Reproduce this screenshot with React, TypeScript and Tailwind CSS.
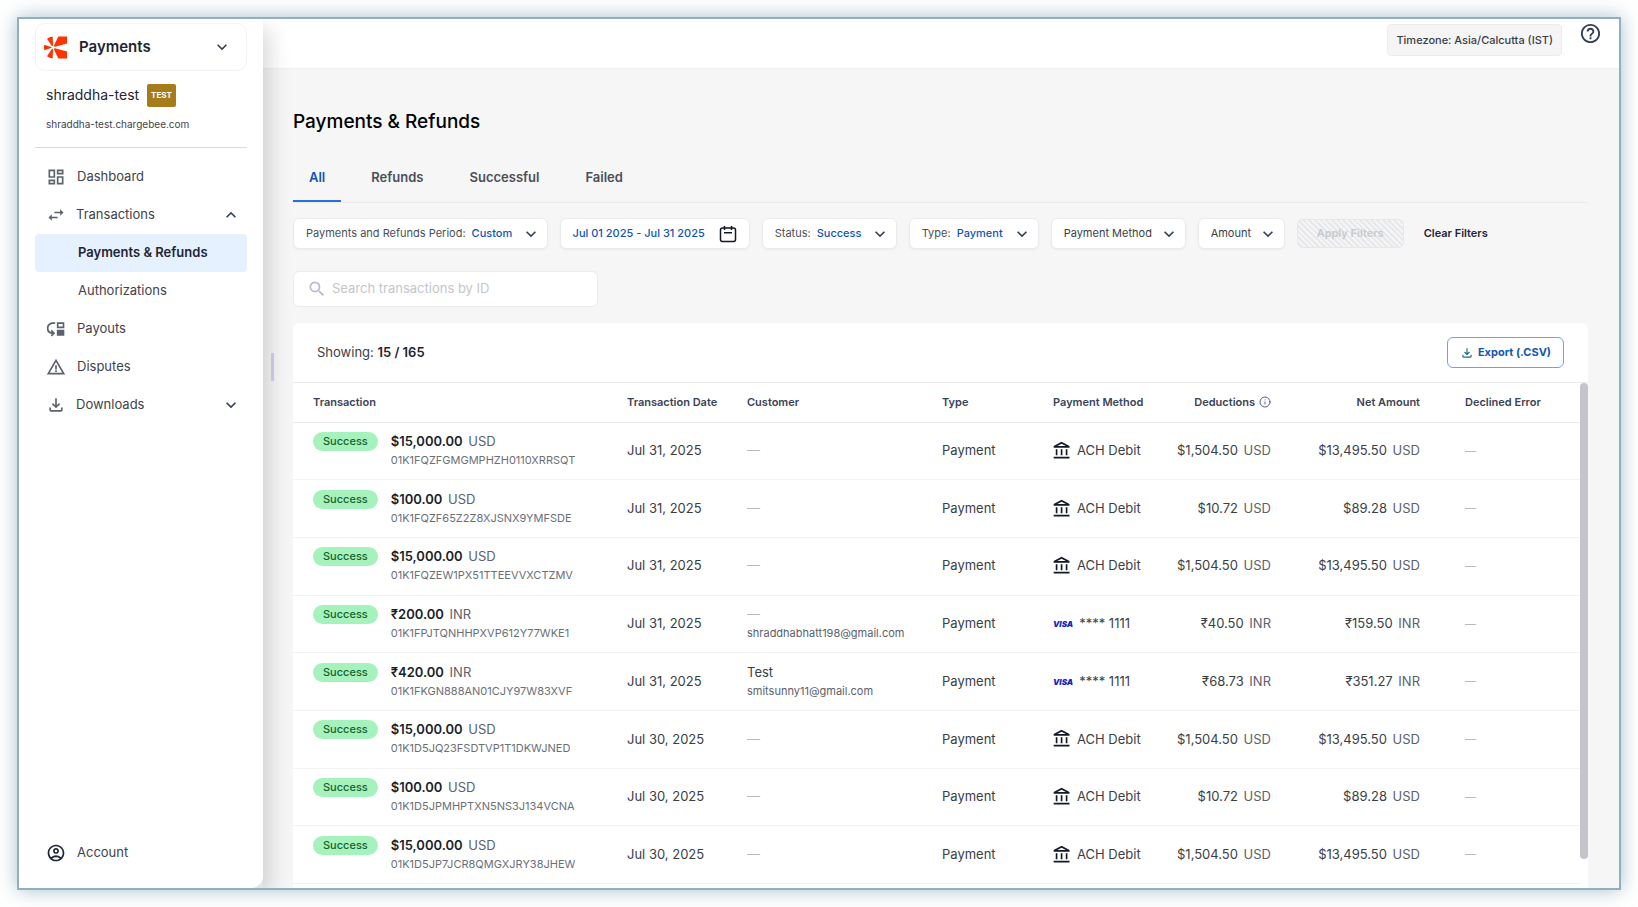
import React from "react";
import {
  MdHelpOutline,
  MdKeyboardArrowDown,
  MdKeyboardArrowUp,
  MdMoveDown,
  MdOutlineAccountBalance,
  MdOutlineAccountCircle,
  MdOutlineDashboard,
  MdOutlineFileDownload,
  MdSearch,
  MdSwapHoriz,
  MdWarningAmber,
} from "react-icons/md";
import { Info } from "lucide-react";

const tabs = ["All", "Refunds", "Successful", "Failed"];

const transactions = [
  { amount: "$15,000.00", currency: "USD", id: "01K1FQZFGMGMPHZH0110XRRSQT", date: "Jul 31, 2025", method: "ach", deductions: "$1,504.50", net: "$13,495.50" },
  { amount: "$100.00", currency: "USD", id: "01K1FQZF65Z2Z8XJSNX9YMFSDE", date: "Jul 31, 2025", method: "ach", deductions: "$10.72", net: "$89.28" },
  { amount: "$15,000.00", currency: "USD", id: "01K1FQZEW1PX51TTEEVVXCTZMV", date: "Jul 31, 2025", method: "ach", deductions: "$1,504.50", net: "$13,495.50" },
  { amount: "₹200.00", currency: "INR", id: "01K1FPJTQNHHPXVP612Y77WKE1", date: "Jul 31, 2025", email: "shraddhabhatt198@gmail.com", method: "visa", deductions: "₹40.50", net: "₹159.50" },
  { amount: "₹420.00", currency: "INR", id: "01K1FKGN888AN01CJY97W83XVF", date: "Jul 31, 2025", name: "Test", email: "smitsunny11@gmail.com", method: "visa", deductions: "₹68.73", net: "₹351.27" },
  { amount: "$15,000.00", currency: "USD", id: "01K1D5JQ23FSDTVP1T1DKWJNED", date: "Jul 30, 2025", method: "ach", deductions: "$1,504.50", net: "$13,495.50" },
  { amount: "$100.00", currency: "USD", id: "01K1D5JPMHPTXN5NS3J134VCNA", date: "Jul 30, 2025", method: "ach", deductions: "$10.72", net: "$89.28" },
  { amount: "$15,000.00", currency: "USD", id: "01K1D5JP7JCR8QMGXJRY38JHEW", date: "Jul 30, 2025", method: "ach", deductions: "$1,504.50", net: "$13,495.50" },
];

const Logo = () => (
  <svg viewBox="0 0 69 68" className="w-[23px] h-[23px]" fill="#ff3300" aria-hidden="true">
    <path d="M43 1H69V22L33 32L29 30Z" />
    <path d="M43 67H69V46L33 36L29 38Z" />
    <path d="M9 8Q16 2 26 1L27 29L24 30Z" />
    <path d="M9 60Q16 66 26 67L27 39L24 38Z" />
    <path d="M1 26L23 33V35L1 42Q-1 34 1 26Z" />
  </svg>
);

const CalendarIcon = () => (
  <svg viewBox="0 0 18 18" className="w-[18px] h-[18px]" fill="none" stroke="#111827" aria-hidden="true">
    <rect x="1.5" y="3" width="15" height="13.5" rx="2" strokeWidth="1.5" />
    <path d="M5.5 1V5M12.5 1V5M5 7.7H13" strokeWidth="1.5" />
  </svg>
);

const Dash = () => <span className="text-[#b8bac2]">—</span>;

const FilterSelect = ({ label, value }: { label?: string; value: string }) => (
  <label className="flex items-center h-[31px] pl-3 pr-[6px] bg-white border border-[#ebebed] rounded-md shadow-xs text-[11px] text-[#4b4f58] whitespace-nowrap">
    {label && <span className="mr-[6px]">{label}</span>}
    <select
      aria-label={label ? undefined : value}
      className={
        label
          ? "appearance-none bg-transparent pr-7 font-medium text-[#0f56b3]"
          : "appearance-none bg-transparent pr-[26px] text-[#3a3e47]"
      }
    >
      <option>{value}</option>
    </select>
    <MdKeyboardArrowDown className="-ml-5 w-5 h-5 text-[#334155] pointer-events-none" />
  </label>
);

const Sidebar = () => {
  const link = "flex items-center h-[38px] pl-[11px] pr-[6px] rounded";
  return (
    <aside className="relative z-10 flex flex-col w-[244px] shrink-0 px-4 pt-1 pb-4 bg-white rounded-br-xl shadow-[6px_10px_22px_rgba(0,0,0,0.16)] text-[13px] text-[#3f434c]">
      <button className="flex items-center h-12 pl-2 pr-[14px] border border-[#f3f3f5] rounded-[10px] text-left">
        <Logo />
        <span className="flex-1 ml-3 text-[15px] font-semibold text-[#1f2433]">Payments</span>
        <MdKeyboardArrowDown className="w-5 h-5 text-[#334155]" />
      </button>
      <div className="pt-3 pb-[14px] pl-[11px] border-b border-[#d9dbe0]">
        <div className="flex items-center gap-2 text-sm leading-6 text-[#1f2433]">
          shraddha-test
          <span className="flex items-center h-[23px] px-1 bg-[#a67c1a] rounded-xs text-[8px] font-bold text-white">
            TEST
          </span>
        </div>
        <a href="#" className="block mt-2 text-[10px] leading-[18px] text-[#3f434c]">
          shraddha-test.chargebee.com
        </a>
      </div>
      <nav className="flex flex-col flex-1 pt-[10px]">
        <a href="#" className={link}>
          <MdOutlineDashboard className="w-5 h-5 mr-[11px] text-[#5c616b]" />
          Dashboard
        </a>
        <button className={link}>
          <MdSwapHoriz className="w-5 h-5 mr-[10px] text-[#5c616b]" />
          Transactions
          <MdKeyboardArrowUp className="w-5 h-5 ml-auto text-[#334155]" />
        </button>
        <a href="#" className="flex items-center h-[38px] pl-[43px] rounded bg-[#e5f1ff] font-semibold text-[#1f2433]">
          Payments &amp; Refunds
        </a>
        <a href="#" className="flex items-center h-[38px] pl-[43px]">
          Authorizations
        </a>
        <a href="#" className={link}>
          <MdMoveDown className="w-5 h-5 mr-[11px] text-[#5c616b]" />
          Payouts
        </a>
        <a href="#" className={link}>
          <MdWarningAmber className="w-5 h-5 mr-[11px] text-[#5c616b]" />
          Disputes
        </a>
        <button className={link}>
          <MdOutlineFileDownload className="w-5 h-5 mr-[10px] text-[#5c616b]" />
          Downloads
          <MdKeyboardArrowDown className="w-5 h-5 ml-auto text-[#334155]" />
        </button>
        <a href="#" className="flex items-center h-[38px] pl-[11px] mt-auto">
          <MdOutlineAccountCircle className="w-5 h-5 mr-[11px] text-[#1f2433]" />
          Account
        </a>
      </nav>
      <span className="absolute top-[334px] -right-[11px] w-[3px] h-7 bg-[#c3c4e0]" />
    </aside>
  );
};

const Filters = () => (
  <div className="flex flex-wrap items-center gap-3 mt-[15px]">
    <FilterSelect label="Payments and Refunds Period:" value="Custom" />
    <button className="flex items-center gap-[14px] h-[31px] px-3 bg-white border border-[#ebebed] rounded-md shadow-xs text-[11px] font-medium text-[#0f56b3]">
      Jul 01 2025 - Jul 31 2025
      <CalendarIcon />
    </button>
    <FilterSelect label="Status:" value="Success" />
    <FilterSelect label="Type:" value="Payment" />
    <FilterSelect value="Payment Method" />
    <FilterSelect value="Amount" />
    <button
      disabled
      className="h-[29px] px-[19px] border border-[#e6e7ea] rounded-md bg-[repeating-linear-gradient(45deg,#f5f5f6_0,#f5f5f6_2px,#e7e8eb_2px,#e7e8eb_4px)] text-[11px] font-semibold text-[#c8cacf]"
    >
      Apply Filters
    </button>
    <button className="ml-2 text-[11px] font-semibold text-[#1f2433]">Clear Filters</button>
  </div>
);

const TransactionTable = () => (
  <table className="flex-1 h-[501px] table-fixed text-left">
    <colgroup>
      <col className="w-[314px]" />
      <col className="w-[120px]" />
      <col className="w-[195px]" />
      <col className="w-[111px]" />
      <col className="w-[122px]" />
      <col className="w-[136px]" />
      <col className="w-[149px]" />
      <col />
    </colgroup>
    <thead>
      <tr className="h-[39px] border-b border-[#e9eaed] text-[11px] text-[#3a4355] whitespace-nowrap">
        <th className="pl-5 font-semibold">Transaction</th>
        <th className="pl-5 font-semibold">Transaction Date</th>
        <th className="pl-5 font-semibold">Customer</th>
        <th className="pl-5 font-semibold">Type</th>
        <th className="pl-5 font-semibold">Payment Method</th>
        <th className="pr-5 font-semibold">
          <span className="flex items-center justify-end gap-1">
            Deductions <Info className="w-3 h-3 text-[#5a5a8c]" strokeWidth={2} />
          </span>
        </th>
        <th className="pr-5 font-semibold text-right">Net Amount</th>
        <th className="pl-[25px] font-semibold">Declined Error</th>
      </tr>
    </thead>
    <tbody>
      {transactions.map((t) => (
        <tr key={t.id} className="h-[57px] border-b border-[#f3f3f5] text-[13px] text-[#3a3e47] whitespace-nowrap">
          <td className="pl-5">
            <div className="flex items-start gap-[13px]">
              <span className="px-[10px] bg-[#a6f2bc] rounded-full text-[11px] font-medium leading-[19px] text-[#14632d]">
                Success
              </span>
              <div>
                <div className="leading-[19px] text-[#5c616b]">
                  <span className="mr-[2px] font-semibold text-[#1a1e2b]">{t.amount}</span> {t.currency}
                </div>
                <div className="text-[11px] leading-[19px] text-[#6b6f78]">{t.id}</div>
              </div>
            </div>
          </td>
          <td className="pl-5">{t.date}</td>
          <td className="pl-5">
            {t.name ? <div className="leading-[19px]">{t.name}</div> : <Dash />}
            {t.email && <div className="text-[11px] leading-[19px] text-[#5c616b]">{t.email}</div>}
          </td>
          <td className="pl-5">Payment</td>
          <td className="pl-5">
            {t.method === "ach" ? (
              <span className="flex items-center gap-[5px]">
                <MdOutlineAccountBalance className="w-5 h-5 -ml-px text-[#111827]" />
                ACH Debit
              </span>
            ) : (
              <span className="flex items-center gap-[6px]">
                <span className="text-[8px] font-black italic text-[#1a1fc8]">VISA</span>
                **** 1111
              </span>
            )}
          </td>
          <td className="pr-5 text-right">
            <span className="mr-[2px]">{t.deductions}</span> <span className="text-[#5c616b]">{t.currency}</span>
          </td>
          <td className="pr-5 text-right">
            <span className="mr-[2px]">{t.net}</span> <span className="text-[#5c616b]">{t.currency}</span>
          </td>
          <td className="pl-[25px] text-[11px]">
            <Dash />
          </td>
        </tr>
      ))}
    </tbody>
  </table>
);

const App = () => {
  return (
    <div className="flex min-h-screen p-[17px] bg-white font-['Inter',sans-serif]">
      <div className="flex flex-1 overflow-hidden border-2 border-[#91b0bf] shadow-[0_0_18px_rgba(110,150,170,0.6)]">
        <Sidebar />
        <main className="flex flex-col flex-1 min-w-0 bg-[#f6f6f6]">
          <header className="flex items-start justify-end gap-[17px] h-[50px] pt-[3px] pr-[17px] bg-white border-b border-[#f0f0f1]">
            <span className="flex items-center h-8 mt-[2px] px-2 bg-[#f5f5f5] border border-[#ececee] rounded text-[11px] font-medium text-[#3a3e47]">
              Timezone: Asia/Calcutta (IST)
            </span>
            <button aria-label="Help">
              <MdHelpOutline className="w-[23px] h-[23px] text-[#334155]" />
            </button>
          </header>
          <div className="flex flex-col flex-1 pl-[30px] pr-[31px] pt-[39px]">
            <h1 className="text-[19px] leading-7 font-medium text-black">Payments &amp; Refunds</h1>
            <div className="flex gap-[14px] mt-4 border-b border-[#ebebed]" role="tablist">
              {tabs.map((tab, index) => (
                <button
                  key={tab}
                  role="tab"
                  aria-selected={index === 0}
                  className={
                    index === 0
                      ? "h-[50px] pt-[3px] px-4 border-b-2 border-[#2670d9] text-[13px] font-semibold text-[#0f56b3]"
                      : "h-[50px] pt-[3px] px-4 border-b-2 border-transparent text-[13px] font-semibold text-[#4b4f58]"
                  }
                >
                  {tab}
                </button>
              ))}
            </div>
            <Filters />
            <label className="flex items-center w-[305px] h-9 mt-[22px] px-[13px] bg-white border border-[#ebebed] rounded-md">
              <MdSearch className="w-5 h-5 mr-[5px] text-[#b9b8d4]" />
              <input
                type="search"
                aria-label="Search transactions"
                placeholder="Search transactions by ID"
                className="flex-1 min-w-0 text-[13px] outline-none placeholder:text-[#c4c6cc]"
              />
            </label>
            <section className="flex flex-col flex-1 mt-4 bg-white rounded-t-md">
              <div className="flex items-center justify-between h-[60px] px-6 border-b border-[#ebebed] text-[13px] text-[#3a3e47]">
                <p>
                  Showing: <span className="font-semibold text-[#1f2433]">15 / 165</span>
                </p>
                <button className="flex items-center gap-1 h-[31px] px-3 border border-[#6ea3ea] rounded-md text-[11px] font-bold text-[#0f56b3]">
                  <MdOutlineFileDownload className="w-[14px] h-[14px] text-[#1d6a8c]" />
                  Export (.CSV)
                </button>
              </div>
              <div className="flex items-start">
                <TransactionTable />
                <div className="w-2 h-[476px] bg-[#c4c5cb] rounded-full" />
              </div>
            </section>
          </div>
        </main>
      </div>
    </div>
  );
};

export default App;
